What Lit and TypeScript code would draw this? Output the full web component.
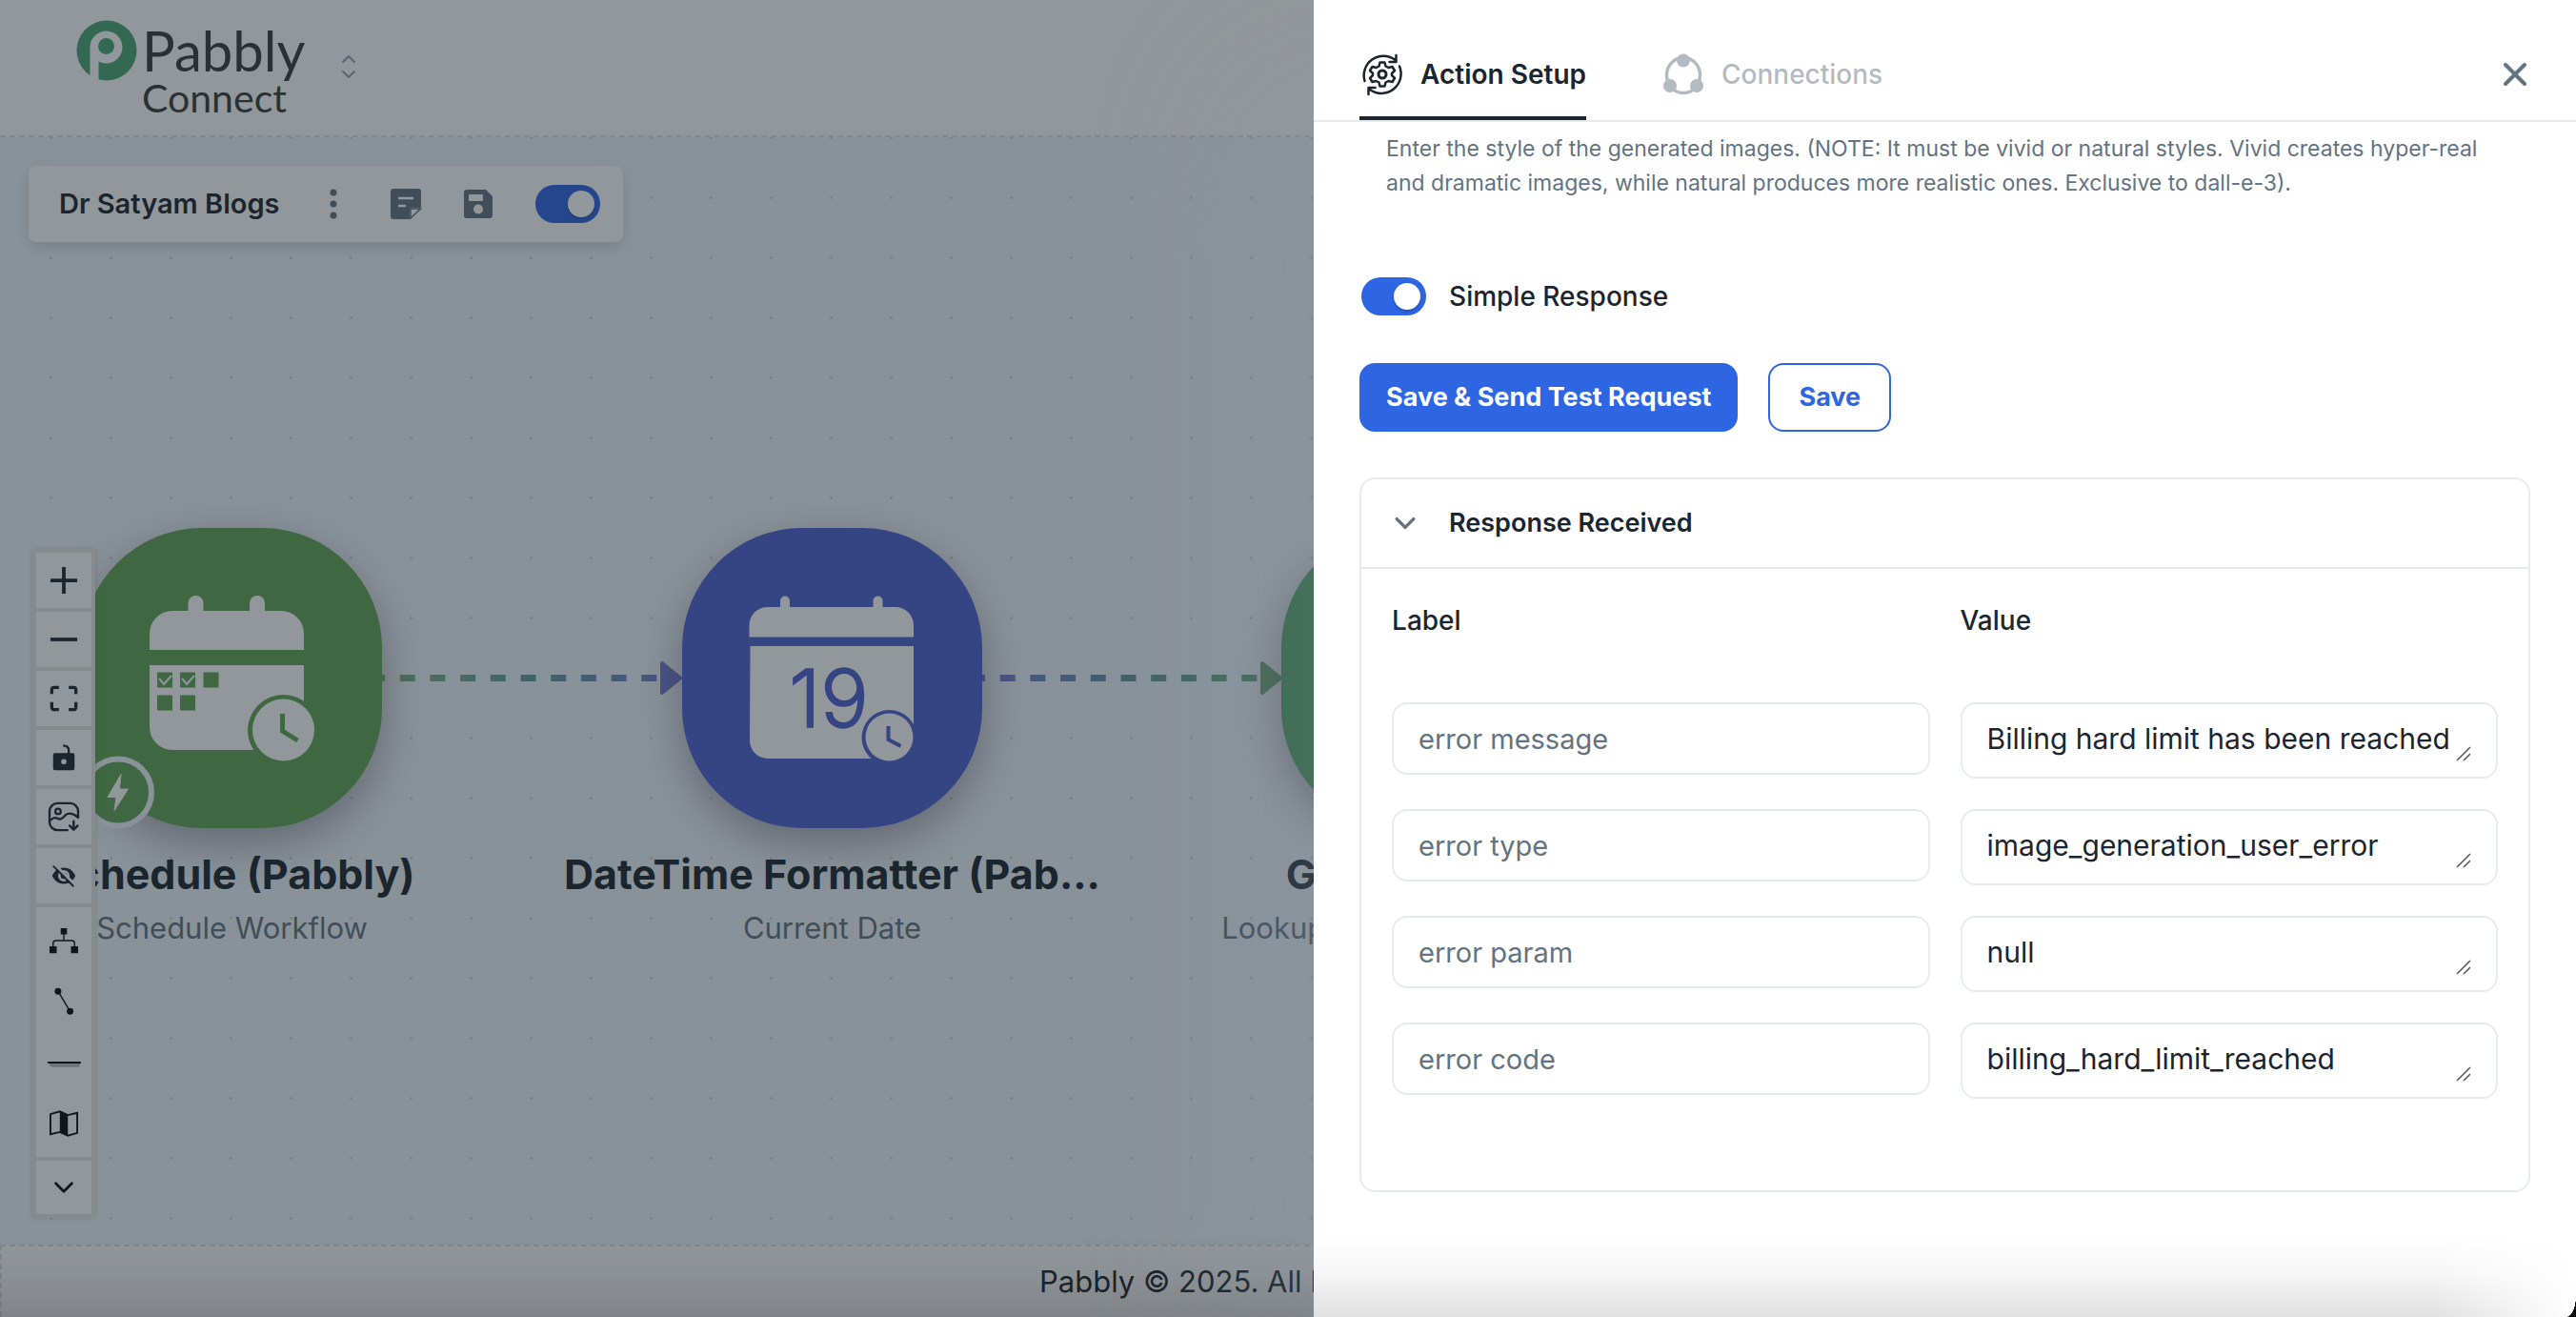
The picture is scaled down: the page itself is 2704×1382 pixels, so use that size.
import { LitElement, html, svg, css } from "lit";
import { customElement, property } from "lit/decorators.js";

const stroke = (d: string, width = 3) => svg`<path d=${d} fill="none" stroke="currentColor" stroke-width=${width} stroke-linecap="round" stroke-linejoin="round"></path>`;

const icons = {
  plus: svg`<path d="M16 1v30M1 16h30" stroke="currentColor" stroke-width="4"></path>`,
  minus: svg`<path d="M1 16h30" stroke="currentColor" stroke-width="4"></path>`,
  fit: svg`<path d="M2.500 11V6a2.500 2.500 0 0 1 2.500-2.500h5.500M21.500 3.500H27A2.500 2.500 0 0 1 29.500 6v5M29.500 20v6a2.500 2.500 0 0 1-2.500 2.500h-5.500M10.500 28.500H5A2.500 2.500 0 0 1 2.500 26v-6" fill="none" stroke="currentColor" stroke-width="3.500"></path>`,
  lock: svg`<path d="M21.500 12V8c0-3-2-5.500-6.500-5.500" fill="none" stroke="currentColor" stroke-width="2.500"></path><path fill-rule="evenodd" fill="currentColor" d="M6 11h20a2 2 0 0 1 2 2v15a2 2 0 0 1-2 2H6a2 2 0 0 1-2-2V13a2 2 0 0 1 2-2zm10 6.500a3 3 0 1 0 0 6 3 3 0 0 0 0-6z"></path>`,
  image: svg`${stroke("M20 31H9a9 9 0 0 1-9-9V10a9 9 0 0 1 9-9h14a9 9 0 0 1 9 9v7", 2.500)}<circle cx="9.500" cy="10" r="3" fill="none" stroke="currentColor" stroke-width="2.500"></circle>${stroke("M1 20c3-3 5-4 8-2 4 2 6-1 9-4 4-3 8-2 13 2M27 21v9M22.500 26l4.500 4.500 4.500-4.500", 2.500)}`,
  eye: svg`<path fill="currentColor" fill-rule="evenodd" d="M3 16c3-6 7-9 13-9s10 3 13 9c-3 6-7 9-13 9S6 22 3 16zm13-6.500a6.500 6.500 0 1 0 0 13 6.500 6.500 0 0 0 0-13zm0 3a3.500 3.500 0 1 1 0 7 3.500 3.500 0 0 1 0-7z"></path><path d="M6 3.500L29 26.500" stroke="#fff" stroke-width="3"></path><path d="M4 5L27 28" stroke="currentColor" stroke-width="2"></path>`,
  tree: svg`<path fill="currentColor" d="M12.500 2h7v7h-7zM0 22.500h8v7.500H0zM24 22.500h8v7.500h-8z"></path><path d="M16 8v8M4 23v-4a3 3 0 0 1 3-3h18a3 3 0 0 1 3 3v4" fill="none" stroke="currentColor" stroke-width="1.500"></path>`,
  edge: svg`<circle cx="9.500" cy="4.500" r="3.700" fill="currentColor"></circle><circle cx="23" cy="27" r="3.700" fill="currentColor"></circle><path d="M9.500 4.500L23 27" stroke="currentColor" stroke-width="1.500"></path>`,
  rule: svg`<path d="M0 16h34v2a3 3 0 0 1-3 3H4a4 4 0 0 1-4-4z" fill="#bdbfc2"></path><path d="M-2 16h37" stroke="currentColor" stroke-width="2"></path>`,
  map: svg`<path d="M1 5.500l10.500-3 9 4 10.500-2.500v22.500l-10.500 3-9-4L1 28z" fill="none" stroke="currentColor" stroke-width="2"></path><path d="M11.500 2.500l9 4v23l-9-4z" fill="currentColor"></path>`,
  down: stroke("M7 11.500l9 9 9-9", 3),
  expand: stroke("M6 11l10 10 10-10", 4),
  note: svg`<path fill="currentColor" d="M3 0h26a3 3 0 0 1 3 3v17h-9a3 3 0 0 0-3 3v9H3a3 3 0 0 1-3-3V3a3 3 0 0 1 3-3z"></path><path d="M8 10h16M8 18h8" stroke="#fff" stroke-width="2.500"></path><path d="M21 31V21h10.500z" fill="#fff" stroke="currentColor" stroke-width="1.500"></path>`,
  save: svg`<path fill="currentColor" fill-rule="evenodd" d="M4 1h20l7 7v20a3 3 0 0 1-3 3H4a3 3 0 0 1-3-3V4a3 3 0 0 1 3-3zm3 5a1 1 0 0 0-1 1v5a1 1 0 0 0 1 1h13a1 1 0 0 0 1-1V7a1 1 0 0 0-1-1zm9 10.500a5 5 0 1 0 0 10 5 5 0 0 0 0-10z"></path>`,
  dots: svg`<circle cx="16" cy="4" r="3.500" fill="currentColor"></circle><circle cx="16" cy="16" r="3.500" fill="currentColor"></circle><circle cx="16" cy="28" r="3.500" fill="currentColor"></circle>`,
  close: stroke("M6 6l20 20M26 6L6 26", 4),
};

type IconName = keyof typeof icons;
const icon = (name: IconName) => html`<svg class="icon" viewBox="0 0 32 32" aria-hidden="true">${icons[name]}</svg>`;

const sharedStyles = css`
  * { box-sizing: border-box; }
  button, input, textarea { font: inherit; color: inherit; margin: 0; }
  button { border: 0; padding: 0; background: none; cursor: pointer; }
  .icon { display: block; width: 32px; height: 32px; overflow: visible; }
  .switch {
    appearance: none; flex: none; width: 68px; height: 40px; border-radius: 20px;
    background: #2d65e2; padding: 6px; display: flex; justify-content: flex-end; cursor: pointer;
  }
  .switch::before {
    content: ""; width: 28px; height: 28px; border-radius: 50%; background: #fff;
    box-shadow: 0 2px 3px rgba(0, 0, 0, 0.2);
  }
  .switch:not(:checked) { justify-content: flex-start; background: #c4cdd5; }
`;

@customElement("flow-controls")
class FlowControls extends LitElement {
  static styles = [sharedStyles, css`
    :host {
      display: flex; flex-direction: column; gap: 4px; padding: 4px;
      background: #e9e8e4; box-shadow: 0 0 5px rgba(90, 80, 60, 0.25); color: #1c252e;
    }
    .control, .group { background: #fff; width: 58px; display: grid; place-items: center; }
    .control { height: 58px; }
    .control .icon { width: 30px; height: 30px; }
    .group { color: #06090d; padding: 3px 0; }
    .group .control { height: 64px; background: none; }
    .last { height: 56px; color: #06090d; }
  `];
  render() {
    const main: [IconName, string][] = [["plus", "Zoom in"], ["minus", "Zoom out"], ["fit", "Fit view"], ["lock", "Toggle lock"], ["image", "Download image"], ["eye", "Hide details"]];
    const extra: [IconName, string][] = [["tree", "Layout"], ["edge", "Edge style"], ["rule", "Line style"], ["map", "Mini map"]];
    const button = ([name, label]: [IconName, string]) => html`<button class="control" aria-label=${label}>${icon(name)}</button>`;
    return html`
      ${main.map(button)}
      <div class="group">${extra.map(button)}</div>
      <button class="control last" aria-label="Collapse">${icon("down")}</button>`;
  }
}

@customElement("flow-canvas")
class FlowCanvas extends LitElement {
  static styles = [sharedStyles, css`
    :host {
      display: block; position: relative; overflow: hidden; background-color: #f0f6fc;
      background-image: radial-gradient(circle, #d8d5ce 1px, transparent 2px);
      background-size: 63px 63px; background-position: 22px -31px;
    }
    .edges { position: absolute; left: 0; top: 0; width: 1400px; height: 1000px; }
    .node {
      position: absolute; top: 410px; width: 601px; display: flex; flex-direction: column; align-items: center;
      white-space: nowrap; text-align: center;
    }
    .first { left: -57px; }
    .second { left: 573px; }
    .third { left: 1202px; }
    .tile {
      width: 315px; height: 315px; border-radius: 126px; margin-bottom: 20px;
      box-shadow: 0 16px 48px rgba(30, 20, 40, 0.36);
    }
    .green { background: #60a355; }
    .blue { background: #4e60d2; }
    .mint { background: #4ba263; }
    .art { display: block; width: 315px; height: 315px; overflow: visible; }
    .day { font: 300 84px "Inter", "Liberation Sans", sans-serif; }
    .name { margin: 0; font-size: 43px; font-weight: 700; line-height: 56px; color: #1c252e; }
    .task { margin: 0; padding-top: 9px; font-size: 31px; line-height: 40px; color: #637381; }
    .toolbar {
      position: absolute; left: 30px; top: 30px; width: 624px; height: 80px; border-radius: 8px; background: #fff;
      box-shadow: 0 6px 16px rgba(60, 70, 90, 0.2); display: flex; align-items: center; padding: 0 24px 0 32px;
      color: #637381;
    }
    .title { flex: 1; margin: 0; font-size: 29px; line-height: 40px; font-weight: 600; color: #1c252e; white-space: nowrap; }
    .tools { display: flex; align-items: center; gap: 44px; }
    flow-controls { position: absolute; left: 34px; bottom: 28px; }
  `];
  render() {
    return html`
      <svg class="edges" viewBox="0 144 1400 1000" aria-hidden="true">
        <defs>
          <linearGradient id="toBlue" gradientUnits="userSpaceOnUse" x1="401" x2="716" y1="0" y2="0">
            <stop offset="0" stop-color="#80b58c"></stop><stop offset="0.5" stop-color="#649a9e"></stop><stop offset="1" stop-color="#7380d8"></stop>
          </linearGradient>
          <linearGradient id="toGreen" gradientUnits="userSpaceOnUse" x1="1031" x2="1346" y1="0" y2="0">
            <stop offset="0" stop-color="#7380d8"></stop><stop offset="0.5" stop-color="#6296a2"></stop><stop offset="1" stop-color="#6aab7a"></stop>
          </linearGradient>
        </defs>
        <path d="M388 711.500H693" stroke="url(#toBlue)" stroke-width="7" stroke-dasharray="16 15.700"></path>
        <path d="M1018 711.500H1322" stroke="url(#toGreen)" stroke-width="7" stroke-dasharray="16 15.700"></path>
        <path d="M695 696l19 15.500-19 15.500z" fill="#7380d8" stroke="#7380d8" stroke-width="4" stroke-linejoin="round"></path>
        <path d="M1325 696l19 15.500-19 15.500z" fill="#6aab7a" stroke="#6aab7a" stroke-width="4" stroke-linejoin="round"></path>
      </svg>
      <article class="node first">
        <div class="tile green">
          <svg class="art" viewBox="86 554 315 315" aria-hidden="true">
            <g fill="#fff">
              <path d="M197.500 642v-9a8 8 0 0 1 16 0v9h48.500v-9a8 8 0 0 1 16 0v9zM157 682v-17a24 24 0 0 1 24-24h114a24 24 0 0 1 24 24v17zM157 698h162v89H181a24 24 0 0 1-24-24z"></path>
            </g>
            <g fill="#60a355">
              <path d="M165 705.500h16v16h-16zM189 705.500h16v16h-16zM213.500 705.500h16v16h-16zM165 729.500h16v16h-16zM189 729.500h16v16h-16z"></path>
              <circle cx="297.500" cy="766.500" r="37.500"></circle><path d="M320 775h14v22h-52v-10h30z"></path>
            </g>
            <path d="M167 712l5 6 8-9M191 712l5 6 8-9" fill="none" stroke="#fff" stroke-width="2"></path>
            <circle cx="297.500" cy="766" r="32.500" fill="#fff"></circle>
            <path d="M296.500 749v18l16 10" fill="none" stroke="#60a355" stroke-width="5"></path>
            <circle cx="124" cy="831.500" r="35" fill="#60a355" stroke="#eff4fb" stroke-width="6"></circle>
            <path d="M127 812.500l-14 24h9l-2 14 14.500-22.500h-9z" fill="#fff" stroke="#fff" stroke-linejoin="round"></path>
          </svg>
        </div>
        <h2 class="name">Schedule (Pabbly)</h2>
        <p class="task">Schedule Workflow</p>
      </article>
      <article class="node second">
        <div class="tile blue">
          <svg class="art" viewBox="716 554 315 315" aria-hidden="true">
            <path fill="#fff" d="M819 638v-7.500a5 5 0 0 1 10 0V638h87.500v-7.500a5 5 0 0 1 10 0V638zM786.500 668.500V656a19 19 0 0 1 19-19H940a19 19 0 0 1 19 19v12.500zM787.500 678H959v118H806a19 19 0 0 1-19-19z"></path>
            <text class="day" x="870" y="763" text-anchor="middle" fill="#4e60d2" stroke="#4e60d2" stroke-width="1.500">19</text>
            <circle cx="933.500" cy="774" r="29" fill="#4e60d2"></circle><path d="M950 787h12v14h-42v-5h22z" fill="#4e60d2"></path>
            <circle cx="933.500" cy="773.500" r="25" fill="#fff"></circle>
            <path d="M932.500 762v14l13 7" fill="none" stroke="#4e60d2" stroke-width="4"></path>
          </svg>
        </div>
        <h2 class="name">DateTime Formatter (Pab...</h2>
        <p class="task">Current Date</p>
      </article>
      <article class="node third">
        <div class="tile mint"></div>
        <h2 class="name">Google Sheets</h2>
        <p class="task">Lookup Spreadsheet Rows V2</p>
      </article>
      <section class="toolbar">
        <h1 class="title">Dr Satyam Blogs</h1>
        <div class="tools">
          <button aria-label="More">${icon("dots")}</button>
          <button aria-label="Notes">${icon("note")}</button>
          <button aria-label="Save">${icon("save")}</button>
          <input class="switch" type="checkbox" role="switch" aria-label="Workflow enabled" checked />
        </div>
      </section>
      <flow-controls></flow-controls>`;
  }
}

interface ResponseField { label: string; value: string; }

@customElement("action-drawer")
class ActionDrawer extends LitElement {
  static styles = [sharedStyles, css`
    :host { display: flex; flex-direction: column; background: #fff; color: #1c252e; font-size: 28px; line-height: 44px; }
    .head { display: flex; align-items: stretch; justify-content: space-between; padding: 0 48px; border-bottom: 2px solid #e7ebef; height: 128px; }
    .tabs { display: flex; gap: 78px; }
    .tab { display: flex; align-items: center; gap: 16px; padding-top: 34px; border-bottom: 4px solid transparent; font-weight: 500; color: #b4bac1; }
    .active { color: #1c252e; font-weight: 600; border-color: #1c252e; }
    .tabicon { display: block; width: 48px; height: 48px; }
    .close { color: #637381; padding-top: 30px; }
    .body { padding: 10px 48px 48px; }
    .hint { margin: 0; padding: 0 28px 79px; font-size: 23px; line-height: 36px; color: #637381; }
    .option { display: flex; align-items: center; gap: 24px; padding-left: 2px; font-weight: 500; }
    .actions { display: flex; gap: 32px; padding: 48px 0; }
    .action { height: 72px; padding: 0 26px; border: 2px solid #2d65e2; border-radius: 16px; font-size: 27px; font-weight: 700; color: #2d65e2; white-space: nowrap; }
    .primary { background: #2d65e2; color: #fff; }
    .secondary { padding: 0 30px; }
    .card { border: 2px solid #e7ebef; border-radius: 16px; }
    .toggle { width: 100%; height: 94px; display: flex; align-items: center; gap: 32px; padding: 0 32px; border-bottom: 2px solid #e7ebef; font-size: 27px; font-weight: 600; text-align: left; }
    .toggle .icon { width: 28px; height: 28px; color: #637381; }
    .fields { display: grid; grid-template-columns: 1fr 1fr; column-gap: 32px; row-gap: 32px; padding: 32px 32px 96px; align-items: start; }
    .column { font-weight: 500; padding-bottom: 32px; }
    .field { display: block; width: 100%; border: 2px solid #e7ebef; border-radius: 16px; background: #fff; padding: 0 26px; font-size: 30px; line-height: 44px; outline: none; }
    .label { height: 76px; font-size: 29px; color: #637381; }
    .value { height: 80px; padding: 14px 26px; resize: none; overflow: hidden; white-space: nowrap; }
    .cell { position: relative; }
    .grip { position: absolute; right: 28px; bottom: 18px; width: 16px; height: 16px; color: #555; pointer-events: none; }
  `];
  @property({ attribute: false }) fields: ResponseField[] = [
    { label: "error message", value: "Billing hard limit has been reached" },
    { label: "error type", value: "image_generation_user_error" },
    { label: "error param", value: "null" },
    { label: "error code", value: "billing_hard_limit_reached" },
  ];
  render() {
    return html`
      <header class="head">
        <div class="tabs" role="tablist">
          <button class="tab active" role="tab" aria-selected="true">
            <svg class="tabicon" viewBox="0 0 48 48" aria-hidden="true">
              ${stroke("M5.500 31A20.500 20.500 0 0 1 37 8.500M38.500 4v7h-7M42 15.500A20.500 20.500 0 0 1 11 40M9.500 45v-7h7", 2.5)}
              ${stroke("M21.500 11.500h5l1 4 3 1.500 4-1 2.500 4-3 3v2l3 3-2.500 4-4-1-3 1.500-1 4h-5l-1-4-3-1.500-4 1-2.500-4 3-3v-2l-3-3 2.500-4 4 1 3-1.500z", 2.5)}
              <circle cx="24" cy="24" r="4" fill="none" stroke="currentColor" stroke-width="3"></circle>
            </svg>
            Action Setup
          </button>
          <button class="tab" role="tab" aria-selected="false">
            <svg class="tabicon" viewBox="0 0 48 48" aria-hidden="true">
              <ellipse cx="24" cy="25" rx="17.500" ry="18.500" fill="none" stroke="currentColor" stroke-width="3.500"></ellipse>
              <circle cx="24" cy="9.500" r="7" fill="currentColor"></circle><circle cx="10" cy="36" r="7" fill="currentColor"></circle><circle cx="38" cy="36" r="7" fill="currentColor"></circle>
            </svg>
            Connections
          </button>
        </div>
        <button class="close" aria-label="Close">${icon("close")}</button>
      </header>
      <div class="body">
        <p class="hint">Enter the style of the generated images. (NOTE: It must be vivid or natural styles. Vivid creates hyper-real and dramatic images, while natural produces more realistic ones. Exclusive to dall-e-3).</p>
        <div class="option">
          <input class="switch" id="simple" type="checkbox" role="switch" checked />
          <label for="simple">Simple Response</label>
        </div>
        <div class="actions">
          <button class="action primary">Save &amp; Send Test Request</button>
          <button class="action secondary">Save</button>
        </div>
        <section class="card">
          <button class="toggle" aria-expanded="true">${icon("expand")}Response Received</button>
          <div class="fields">
            <div class="column">Label</div>
            <div class="column">Value</div>
            ${this.fields.map((f) => html`
              <input class="field label" aria-label="Label" .value=${f.label} />
              <div class="cell">
                <textarea class="field value" rows="1" aria-label=${f.label} .value=${f.value}></textarea>
                <svg class="grip" viewBox="0 0 16 16" aria-hidden="true"><path d="M1 15L15 1M8 15l7-7" stroke="currentColor" stroke-width="1.500"></path></svg>
              </div>`)}
          </div>
        </section>
      </div>`;
  }
}

@customElement("app-root")
class AppRoot extends LitElement {
  static styles = [sharedStyles, css`
    :host { display: block; position: relative; overflow: hidden; height: 100vh; font-family: "Inter", "Noto Sans", sans-serif; }
    .page { height: 100%; display: flex; flex-direction: column; background: #fff; }
    .top { display: flex; align-items: flex-start; height: 144px; padding: 21px 80px; border-bottom: 2px dashed #e2e2df; }
    .mark { display: block; width: 64px; height: 64px; margin-right: 5px; }
    .brand { font-family: "Lato", sans-serif; color: #383d3b; margin-right: 36px; }
    .brandname { font-size: 58px; line-height: 64px; }
    .product { font-size: 41px; line-height: 36px; }
    .picker { width: 20px; height: 32px; margin-top: 33px; color: #919eab; }
    .pickericon { display: block; width: 20px; height: 32px; }
    flow-canvas { flex: 1; }
    .foot { height: 76px; border: 2px dashed #dfe2e2; border-bottom: 0; text-align: center; font-size: 31px; line-height: 74px; color: #1c252e; }
    .backdrop { position: absolute; inset: 0; background: rgba(28, 37, 46, 0.48); }
    action-drawer { position: absolute; right: 0; top: 0; bottom: 0; width: 49%; box-shadow: -80px 80px 160px -16px rgba(145, 158, 171, 0.24); }
    .fade {
      position: absolute; left: 0; right: 0; bottom: 0; height: 86px; pointer-events: none;
      background: linear-gradient(rgba(0, 0, 0, 0), rgba(0, 0, 0, 0.04) 50%, rgba(0, 0, 0, 0.12));
      mask-image: linear-gradient(to left, transparent, #000 150px);
    }
    .corner { position: absolute; right: 0; bottom: 0; width: 10px; height: 22px; background: radial-gradient(ellipse 10px 22px at 0 0, transparent 98%, #000); pointer-events: none; }
  `];
  render() {
    return html`
      <div class="page">
        <header class="top">
          <svg class="mark" viewBox="0 0 64 64" aria-hidden="true">
            <circle cx="32" cy="32" r="31.500" fill="#4aa673"></circle>
            <path d="M14.500 64V28a17 17 0 1 1 17 17.500q-4.500 0-8-2V64z" fill="#fff"></path>
            <circle cx="31.500" cy="27.500" r="8.500" fill="#4aa673"></circle>
          </svg>
          <div class="brand">
            <div class="brandname">Pabbly</div>
            <div class="product">Connect</div>
          </div>
          <button class="picker" aria-label="Switch product">
            <svg class="pickericon" viewBox="0 0 20 32" aria-hidden="true">${stroke("M4 11l6-6 6 6M4 21l6 6 6-6", 2)}</svg>
          </button>
        </header>
        <flow-canvas></flow-canvas>
        <footer class="foot">Pabbly © 2025. All Rights Reserved</footer>
      </div>
      <div class="backdrop"></div>
      <action-drawer></action-drawer>
      <div class="fade"></div>
      <div class="corner"></div>`;
  }
}
